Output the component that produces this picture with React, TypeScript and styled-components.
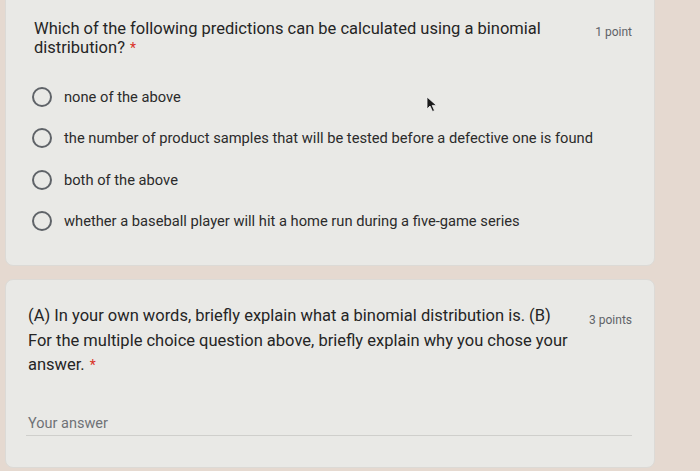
import styled, { createGlobalStyle } from "styled-components";

const GlobalStyle = createGlobalStyle`
  html, body {
    margin: 0;
    padding: 0;
    background: #e5d9d0;
    font-family: Roboto, "Liberation Sans", Arial, sans-serif;
    overflow: hidden;
  }
`;

const Page = styled.div`
  position: relative;
  width: 700px;
  height: 471px;
  padding: 0 45px 0 5px;
  box-sizing: border-box;
  display: flex;
  flex-direction: column;
  gap: 13px;
`;

const Card = styled.div<{ $top?: boolean }>`
  background: #e9e9e6;
  border: 1px solid #dcdad6;
  border-radius: 8px;
  box-sizing: border-box;
  margin-top: ${(p) => (p.$top ? "-10px" : "0")};
`;

const Header = styled.div<{ $pad: string }>`
  display: flex;
  align-items: flex-start;
  justify-content: space-between;
  padding: ${(p) => p.$pad};
`;

const Title = styled.div<{ $lh: number }>`
  font-size: 16.5px;
  line-height: ${(p) => p.$lh}px;
  color: #252525;
  white-space: nowrap;
`;

const Required = styled.span`
  color: #d93025;
  font-size: 14px;
  margin-left: 5px;
`;

const Points = styled.div<{ $mt: number }>`
  font-size: 12px;
  color: #5f6368;
  margin-top: ${(p) => p.$mt}px;
`;

const Options = styled.div`
  display: flex;
  flex-direction: column;
  padding: 18px 0 23px 26px;
`;

const Option = styled.label`
  display: flex;
  align-items: center;
  height: 41.5px;
  gap: 12px;
  font-size: 14.7px;
  color: #2b2b2b;
`;

const Radio = styled.span`
  width: 16px;
  height: 16px;
  border: 2px solid #5f6368;
  border-radius: 50%;
  flex-shrink: 0;
`;

const AnswerBlock = styled.div`
  padding: 36px 22px 31px 20px;
`;

const AnswerInput = styled.div`
  font-size: 14.5px;
  color: #6f7276;
  padding: 0 0 1px 2px;
  border-bottom: 1px solid #cfcfcc;
  line-height: 20px;
`;

const Cursor = styled.svg`
  position: absolute;
  left: 426px;
  top: 96px;
`;

const options = [
  "none of the above",
  "the number of product samples that will be tested before a defective one is found",
  "both of the above",
  "whether a baseball player will hit a home run during a five-game series",
];

export default function App() {
  return (
    <>
      <GlobalStyle />
      <Page>
        <Card $top>
          <Header $pad="28px 22px 0 28px">
            <Title $lh={19}>
              Which of the following predictions can be calculated using a binomial
              <br />
              distribution?<Required>*</Required>
            </Title>
            <Points $mt={6}>1 point</Points>
          </Header>
          <Options>
            {options.map((o) => (
              <Option key={o}>
                <Radio />
                {o}
              </Option>
            ))}
          </Options>
        </Card>
        <Card>
          <Header $pad="24px 22px 0 22px">
            <Title $lh={24.5}>
              (A) In your own words, briefly explain what a binomial distribution is. (B)
              <br />
              For the multiple choice question above, briefly explain why you chose your
              <br />
              answer.<Required>*</Required>
            </Title>
            <Points $mt={9}>3 points</Points>
          </Header>
          <AnswerBlock>
            <AnswerInput>Your answer</AnswerInput>
          </AnswerBlock>
        </Card>
        <Cursor width="12" height="17" viewBox="0 0 12 17">
          <path d="M1 1 L1 13 L4 10 L6.5 15.5 L8.5 14.6 L6.2 9.4 L10.5 9.4 Z" fill="#1a1a1a" stroke="#f2f2f2" strokeWidth="0.8" />
        </Cursor>
      </Page>
    </>
  );
}
